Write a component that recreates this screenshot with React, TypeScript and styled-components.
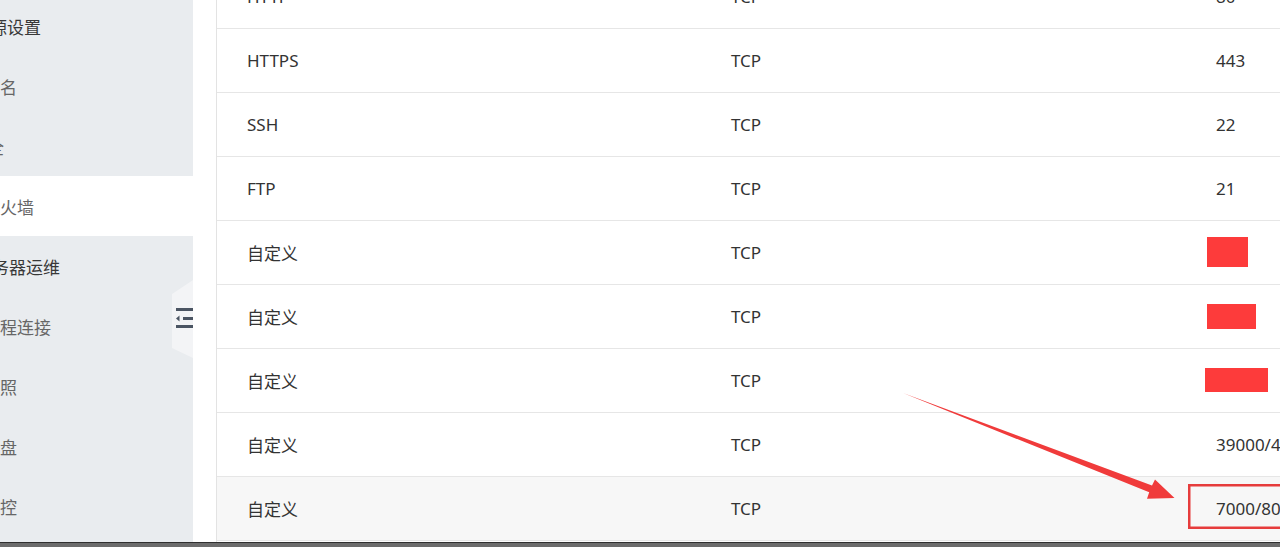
import React from "react";
import styled, { createGlobalStyle } from "styled-components";

const GlobalStyle = createGlobalStyle`
  html, body {
    margin: 0;
    padding: 0;
    background: #fff;
    font-family: "Noto Sans", "Noto Sans CJK SC", sans-serif;
  }
`;

const Page = styled.div`
  position: relative;
  width: 1280px;
  height: 547px;
  overflow: hidden;
  display: flex;
  flex-direction: column;
`;

const Main = styled.div`
  flex: 1;
  display: flex;
  min-height: 0;
`;

const Sidebar = styled.nav`
  position: relative;
  width: 193px;
  flex-shrink: 0;
  background: #e9ecef;
  overflow: hidden;
  display: flex;
  flex-direction: column;
  & .menu {
    margin-top: -4px;
    display: flex;
    flex-direction: column;
  }
`;

const MenuItem = styled.div<{ $active?: boolean; $header?: boolean; $indent: number }>`
  height: 60px;
  line-height: 64px;
  white-space: nowrap;
  overflow: hidden;
  background: ${p => (p.$active ? "#fff" : "transparent")};
  color: ${p => (p.$header ? "#383838" : "#666")};
  font-size: 17px;
  font-weight: 400;
  text-indent: ${p => p.$indent}px;
`;

const Toggle = styled.div`
  position: absolute;
  right: 0;
  top: 280px;
  width: 21px;
  height: 78px;
`;

const Gutter = styled.div`
  width: 23px;
  flex-shrink: 0;
`;

const Table = styled.div`
  flex: 1;
  border-left: 1px solid #e3e3e3;
  overflow: hidden;
  & .rows {
    margin-top: -35px;
  }
`;

const Row = styled.div<{ $hover?: boolean }>`
  display: grid;
  grid-template-columns: 484px 485px 300px;
  height: 64px;
  border-bottom: 1px solid #e6e6e6;
  box-sizing: border-box;
  background: ${p => (p.$hover ? "#f7f7f7" : "#fff")};
  color: #333;
  font-size: 17px;
`;

const Cell = styled.div`
  display: flex;
  align-items: center;
  padding-left: 30px;
  padding-bottom: 1px;
  white-space: nowrap;
`;

const Redact = styled.span<{ $w: number; $h: number; $shift: number }>`
  display: inline-block;
  width: ${p => p.$w}px;
  height: ${p => p.$h}px;
  margin-left: ${p => p.$shift}px;
  background: #fd3b3b;
`;

const WindowEdge = styled.div`
  height: 4px;
  flex-shrink: 0;
  border-top: 1px solid #2f2f2f;
  background: #6c6c6c;
`;

const Overlay = styled.svg`
  position: absolute;
  left: 0;
  top: 0;
  pointer-events: none;
`;

interface MenuEntry {
  text: string;
  indent: number;
  header?: boolean;
  active?: boolean;
}

const menu: MenuEntry[] = [
  { text: "资源设置", indent: -27, header: true },
  { text: "域名", indent: -17 },
  { text: "安全", indent: -30 },
  { text: "防火墙", indent: -17, active: true },
  { text: "服务器运维", indent: -25, header: true },
  { text: "远程连接", indent: -17 },
  { text: "快照", indent: -17 },
  { text: "云硬盘", indent: -34 },
  { text: "监控", indent: -17 },
];

interface IRule {
  app: string;
  proto: string;
  port?: string;
  redact?: { w: number; h: number; shift: number };
}

const rules: IRule[] = [
  { app: "HTTP", proto: "TCP", port: "80" },
  { app: "HTTPS", proto: "TCP", port: "443" },
  { app: "SSH", proto: "TCP", port: "22" },
  { app: "FTP", proto: "TCP", port: "21" },
  { app: "自定义", proto: "TCP", redact: { w: 41, h: 30, shift: -9 } },
  { app: "自定义", proto: "TCP", redact: { w: 49, h: 25, shift: -9 } },
  { app: "自定义", proto: "TCP", redact: { w: 63, h: 24, shift: -11 } },
  { app: "自定义", proto: "TCP", port: "39000/40000" },
  { app: "自定义", proto: "TCP", port: "7000/8000" },
];

const App: React.FC = () => {
  return (
    <Page>
      <GlobalStyle />
      <Main>
        <Sidebar>
          <div className="menu">
            {menu.map((m, i) => (
              <MenuItem key={i} $indent={m.indent} $header={m.header} $active={m.active}>
                {m.text}
              </MenuItem>
            ))}
          </div>
          <Toggle>
            <svg width="21" height="78" viewBox="0 0 21 78">
              <polygon points="0,14 21,0 21,78 0,68" fill="#f3f4f6" />
              <rect x="4" y="28" width="17" height="3" fill="#4b5563" />
              <polygon points="4,38.5 7.5,35.5 7.5,41.5" fill="#4b5563" />
              <rect x="11" y="37" width="10" height="3" fill="#4b5563" />
              <rect x="4" y="45" width="17" height="3" fill="#4b5563" />
            </svg>
          </Toggle>
        </Sidebar>
        <Gutter />
        <Table>
          <div className="rows">
            {rules.map((r, i) => (
              <Row key={i} $hover={i === rules.length - 1}>
                <Cell>{r.app}</Cell>
                <Cell>{r.proto}</Cell>
                <Cell>
                  {r.redact ? (
                    <Redact $w={r.redact.w} $h={r.redact.h} $shift={r.redact.shift} />
                  ) : (
                    r.port
                  )}
                </Cell>
              </Row>
            ))}
          </div>
        </Table>
      </Main>
      <WindowEdge />
      <Overlay width="1280" height="547">
        <polygon
          points="903,393 1149.2,492.3 1147,498.8 1174.5,498 1155,479.5 1152,485.5"
          fill="#f03b3b"
        />
        <rect x="1189.25" y="485.25" width="100" height="42.5" fill="none" stroke="#e63c3c" strokeWidth="2.5" />
      </Overlay>
    </Page>
  );
};

export default App;
